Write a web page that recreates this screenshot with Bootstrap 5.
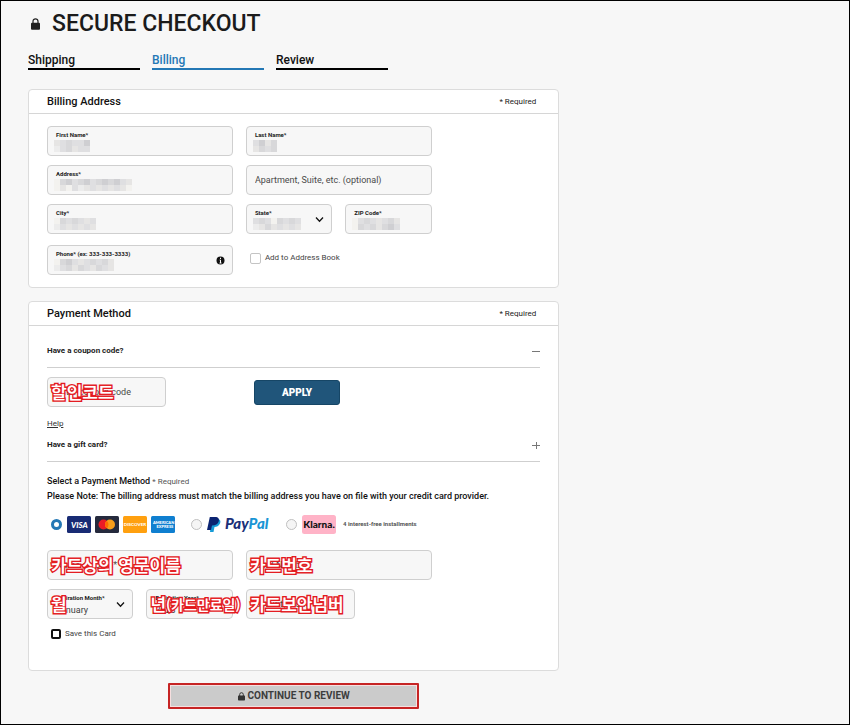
<!DOCTYPE html>
<html lang="en">
<head>
<meta charset="utf-8">
<meta name="viewport" content="width=device-width, initial-scale=1">
<title>Secure Checkout</title>
<link href="https://cdn.jsdelivr.net/npm/bootstrap@5.3.0/dist/css/bootstrap.min.css" rel="stylesheet">
<style>
body { font-family: Roboto, "Noto Sans CJK KR", sans-serif; font-size: 8px; line-height: 16px; color: #1b1b1b; background: #f7f7f7; }
.page { border: 1px solid #000; padding: 9px 24px 14px 27px; }
h1 { font-size: 23px; line-height: 28px; font-weight: 500; }
.title-row { gap: 12px; padding-left: 3px; margin-bottom: 14px; }
.steps { gap: 12px; margin-bottom: 19px; }
.step { width: 112px; font-size: 12px; font-weight: 500; color: #111; border-bottom: 2px solid #000; }
.step.active { color: #2478b5; border-color: #2478b5; }
.panel { border: 1px solid #dcdcdc; border-radius: 4px; background: #fff; margin-bottom: 13px; }
.panel-top { padding: 0 22px 0 18px; height: 24px; border-bottom: 1px solid #d6d6d6; }
.panel-top h2 { font-size: 11px; font-weight: 500; line-height: 16px; color: #111; }
.panel-main { padding: 12px 18px; }
.payment { padding: 17px 18px 29px; }
.fields { width: 78%; display: grid; grid-template-columns: repeat(4, minmax(0, 1fr)); gap: 9px 13px; }
.wide { grid-column: span 2; }
.phone-row { margin-top: 11px; }
.field { position: relative; display: flex; flex-direction: column; height: 30px; padding: 4px 8px 0; border: 1px solid #cfcfcf; border-radius: 4px; background: #f7f7f7; }
.field > label { font-size: 6px; line-height: 8px; font-weight: 700; color: #222; white-space: nowrap; }
.field > input, .field > select { width: 100%; min-width: 0; flex: 1; padding: 0; border: 0; background: transparent; font-size: 9px; line-height: 12px; color: #3c3c3c; outline: 0; appearance: none; }
.field > input::placeholder { color: #4a4a4a; opacity: 1; }
.field.plain { padding-top: 0; }
.mosaic { position: absolute; left: 6px; top: 13px; }
.field-icon { position: absolute; right: 7px; top: 10px; pointer-events: none; }
.note { position: absolute; left: 3px; top: 0; line-height: 27px; font-family: "Noto Sans CJK KR", sans-serif; font-size: 17px; font-weight: 500; color: #fff; white-space: nowrap; -webkit-text-stroke: 3px #e3161b; paint-order: stroke fill; text-shadow: 0 0 1px #f4a0a0; pointer-events: none; z-index: 1; }
.note small { font-size: 14px; vertical-align: 1px; }
.tick { appearance: none; width: 11px; height: 11px; margin: 0; border: 1px solid #c4c4c4; border-radius: 2px; background: #fff; }
.tick.dark { width: 10px; height: 10px; border: 2px solid #111; }
.checks { gap: 4px; color: #444; }
.fold { width: 100%; padding: 0 0 8px; border: 0; border-bottom: 1px solid #cfcfcf; background: none; color: #222; font-size: 8px; line-height: 16px; font-weight: 700; }
.coupon { width: 119px; margin-right: 88px; }
.security { width: 109px; }
.coupon-row { margin-top: 9px; }
.apply { width: 86px; height: 25px; padding: 0; border: 1px solid #164666; border-radius: 3px; background: #20557a; color: #fff; font-size: 10px; font-weight: 900; }
.apply:hover { background: #164666; color: #fff; }
.help { margin: 10px 0 6px; line-height: 14px; color: #333; }
.intro { margin-top: 12px; line-height: 15px; font-size: 9px; font-weight: 500; color: #111; }
.intro span { font-size: 8px; font-weight: 400; color: #555; }
.methods { margin: 10px 0 16px; height: 20px; }
.methods input { appearance: none; width: 11px; height: 11px; margin: 0 5px 0 0; border: 1px solid #c0c0c0; border-radius: 50%; background: #f5f5f5; }
.methods input:checked { border: 3px solid #2478b5; background: #fff; }
.methods label { display: flex; align-items: center; gap: 4px; }
.cards { margin-left: 4px; margin-right: 16px; }
.paypal { margin-right: 16px; }
.installments { font-size: 6px; font-weight: 700; color: #555; margin-left: 3px; }
.save { margin: 8px 0 0 4px; height: 14px; }
.continue { width: 251px; max-width: 100%; height: 26px; padding: 0; margin-top: -1px; gap: 3px; border: 2px solid #c62424; border-radius: 1px; background: #cbcbcb; box-shadow: inset 0 0 0 1px #f6dfdf; color: #3d3d3d; font-size: 10px; font-weight: 700; }
.svg-text { font-family: Lato, Roboto, sans-serif; font-weight: 900; }
</style>
</head>
<body>
<div class="page min-vh-100">
  <header>
    <div class="title-row d-flex align-items-center">
      <svg width="9" height="12" viewBox="0 0 9 12" aria-hidden="true"><path d="M2 5V3.300a2.500 2.500 0 0 1 5 0V5" fill="none" stroke="#222" stroke-width="1.200"/><rect y="4.700" width="9" height="7" rx="1" fill="#222"/></svg>
      <h1 class="mb-0">SECURE CHECKOUT</h1>
    </div>
    <nav class="steps d-flex" aria-label="Checkout steps">
      <a class="step text-decoration-none" href="#shipping">Shipping</a>
      <a class="step active text-decoration-none" href="#billing" aria-current="step">Billing</a>
      <a class="step text-decoration-none" href="#review">Review</a>
    </nav>
  </header>
  <main class="row g-0">
    <form class="col-8">
      <section class="panel" id="billing">
        <div class="panel-top d-flex justify-content-between align-items-center"><h2 class="mb-0">Billing Address</h2><span>* Required</span></div>
        <div class="panel-main">
          <div class="fields">
            <div class="field wide"><label for="first">First Name*</label><input id="first"><svg class="mosaic" data-cells="dcbcca/ecbdcc"></svg></div>
            <div class="field wide"><label for="last">Last Name*</label><input id="last"><svg class="mosaic" data-cells="cadb/dbcb"></svg></div>
            <div class="field wide"><label for="address">Address*</label><input id="address"><svg class="mosaic" data-cells="fbacbacbabacd/fdfcedcdcdcdf"></svg></div>
            <div class="field wide plain"><input id="suite" aria-label="Apartment, Suite, etc." placeholder="Apartment, Suite, etc. (optional)"></div>
            <div class="field wide"><label for="city">City*</label><input id="city"><svg class="mosaic" data-cells="fbcbcdc/ecdcdcd"></svg></div>
            <div class="field"><label for="state">State*</label><select id="state"><option></option></select><svg class="mosaic" data-cells="cbcfbcbc/edbdcdcd"></svg><svg class="field-icon" width="9" height="9" viewBox="0 0 9 9" aria-hidden="true"><path d="M1 2.500l3.500 3.700L8 2.500" fill="none" stroke="#111" stroke-width="1.300"/></svg></div>
            <div class="field"><label for="zip">ZIP Code*</label><input id="zip"><svg class="mosaic" data-cells="fcbcdcbd/fbcbdbac"></svg></div>
          </div>
          <div class="fields phone-row">
            <div class="field wide"><label for="phone">Phone* (ex: 333-333-3333)</label><input id="phone" type="tel"><svg class="mosaic" data-cells="fbacdcbcbd/ecbdbcdbcd"></svg><svg class="field-icon" width="9" height="9" viewBox="0 0 9 9" aria-hidden="true"><circle cx="4.500" cy="4.500" r="4" fill="#111"/><path d="M4.500 1.700v1.300M3.700 4h.8v3M3.500 7h2" fill="none" stroke="#fff" stroke-width="1"/></svg></div>
            <div class="wide checks d-flex align-items-center pb-1 ps-1"><input class="tick" id="book" type="checkbox"><label for="book">Add to Address Book</label></div>
          </div>
        </div>
      </section>

      <section class="panel">
        <div class="panel-top d-flex justify-content-between align-items-center"><h2 class="mb-0">Payment Method</h2><span>* Required</span></div>
        <div class="payment">
          <button class="fold d-flex justify-content-between align-items-center" type="button" aria-expanded="true">Have a coupon code?<svg width="8" height="8" viewBox="0 0 8 8" aria-hidden="true"><path d="M0 4.500h8" stroke="#777"/></svg></button>
          <div class="coupon-row d-flex align-items-center">
            <div class="field plain coupon"><input id="coupon" aria-label="Coupon code" placeholder="Enter coupon code"><span class="note" lang="ko">할인코드</span></div>
            <button class="btn apply" type="button">APPLY</button>
          </div>
          <div class="help"><a class="text-reset" href="#help">Help</a></div>
          <button class="fold d-flex justify-content-between align-items-center" type="button" aria-expanded="false">Have a gift card?<svg width="8" height="8" viewBox="0 0 8 8" aria-hidden="true"><path d="M0 4.500h8M4.500 1v7" stroke="#777"/></svg></button>
          <p class="intro mb-0">Select a Payment Method <span>* Required</span><br>Please Note: The billing address must match the billing address you have on file with your credit card provider.</p>
          <div class="methods d-flex align-items-center">
            <div class="cards d-flex align-items-center"><input type="radio" name="method" id="card" checked>
              <label for="card">
                <svg width="24" height="17" viewBox="0 0 24 17" role="img" aria-label="Visa"><rect width="24" height="17" rx="1.500" fill="#182b74"/><text class="svg-text" x="4" y="11.500" font-size="8" font-style="italic" fill="#fff">VISA</text></svg>
                <svg width="24" height="17" viewBox="0 0 24 17" role="img" aria-label="Mastercard"><rect width="24" height="17" rx="1.500" fill="#252a3d"/><circle cx="8.500" cy="8.500" r="5" fill="#eb1b26"/><circle cx="15" cy="8.500" r="5" fill="#f79e1b"/><path d="M11.750 4.700a5 5 0 0 1 0 7.600a5 5 0 0 1 0-7.600" fill="#ff6a00"/></svg>
                <svg width="24" height="17" viewBox="0 0 24 17" role="img" aria-label="Discover"><rect width="24" height="17" rx="1.500" fill="#ffa00f"/><text class="svg-text" x="12" y="10.300" font-size="4.500" text-anchor="middle" fill="#fff">DISCOVER</text></svg>
                <svg width="24" height="17" viewBox="0 0 24 17" role="img" aria-label="American Express"><rect width="24" height="17" rx="1.500" fill="#0f7fd0"/><text class="svg-text" x="2" y="8" font-size="4" fill="#fff">AMERICAN</text><text class="svg-text" x="5.500" y="12" font-size="4" fill="#fff">EXPRESS</text></svg>
              </label></div>
            <div class="paypal d-flex align-items-center"><input type="radio" name="method" id="paypal">
              <label for="paypal"><svg width="63" height="18" viewBox="0 0 63 18" role="img" aria-label="PayPal"><path d="M4.500 4H10c3 0 4 2 3 4.500S9.500 12 7.500 12L6.500 17H3z" fill="#159bd7"/><path d="M2.800 2H8c3.500 0 4.500 2 3.700 4.500S8.500 10.500 5 10.500L4 15H0z" fill="#0b2472"/><text class="svg-text" x="18" y="14" font-size="15" font-style="italic" fill="#1b2f78">Pay<tspan fill="#1995d5">Pal</tspan></text></svg></label></div>
            <div class="d-flex align-items-center"><input type="radio" name="method" id="klarna">
              <label for="klarna"><svg width="34" height="19" viewBox="0 0 34 19" role="img" aria-label="Klarna"><rect width="34" height="19" rx="2.500" fill="#ffb3c7"/><text class="svg-text" x="17" y="13" font-size="10" text-anchor="middle" fill="#111">Klarna.</text></svg><span class="installments">4 interest-free installments</span></label></div>
          </div>
          <div class="fields">
            <div class="field wide plain"><input id="holder" aria-label="Name on Card" placeholder="Name on Card*"><span class="note" lang="ko">카드상의 영문이름</span></div>
            <div class="field wide plain"><input id="number" aria-label="Card Number" placeholder="Card Number*"><span class="note" lang="ko">카드번호</span></div>
            <div class="field"><label for="month">Expiration Month*</label><select id="month"><option>January</option></select><span class="note" lang="ko">월</span><svg class="field-icon" width="9" height="9" viewBox="0 0 9 9" aria-hidden="true"><path d="M1 2.500l3.500 3.700L8 2.500" fill="none" stroke="#111" stroke-width="1.300"/></svg></div>
            <div class="field"><label for="year">Expiration Year*</label><select id="year"><option>2023</option></select><span class="note" lang="ko">년<small>(카드만료일)</small></span></div>
            <div class="field wide plain security"><input id="cvv" aria-label="Security Code" placeholder="Security Code*"><span class="note" lang="ko">카드보안넘버</span></div>
          </div>
          <div class="save checks d-flex align-items-center"><input class="tick dark" type="checkbox" id="save"><label for="save">Save this Card</label></div>
        </div>
      </section>
      <button class="continue d-flex justify-content-center align-items-center mx-auto" type="submit"><svg width="7" height="9" viewBox="0 0 7 9" aria-hidden="true"><path d="M1.700 4V2.500a1.800 1.800 0 0 1 3.600 0V4" fill="none" stroke="#333"/><rect y="3.500" width="7" height="5" rx=".7" fill="#333"/></svg>CONTINUE TO REVIEW</button>
    </form>
  </main>
</div>
<script src="https://cdn.jsdelivr.net/npm/bootstrap@5.3.0/dist/js/bootstrap.bundle.min.js"></script>
<script>
// Draw the pixelated blocks that hide private values; each letter is a tile shade.
const shades = { a: '#cfcfd2', b: '#d8d8da', c: '#dfdfe1', d: '#e6e5e4', e: '#ececec', f: '#f3f2ef' };
document.querySelectorAll('.mosaic').forEach(svg => {
  const rows = svg.dataset.cells.split('/');
  svg.setAttribute('width', rows[0].length * 6);
  svg.setAttribute('height', rows.length * 6);
  rows.forEach((row, y) => [...row].forEach((cell, x) => {
    const tile = document.createElementNS('http://www.w3.org/2000/svg', 'rect');
    Object.entries({ x: x * 6, y: y * 6, width: 6, height: 6, fill: shades[cell] }).forEach(([k, v]) => tile.setAttribute(k, v));
    svg.append(tile);
  }));
});
</script>
</body>
</html>
